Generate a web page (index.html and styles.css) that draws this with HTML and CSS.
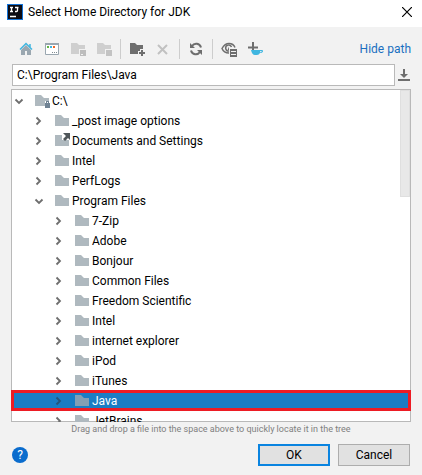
FILE: index.html
```html
<!DOCTYPE html>
<html lang="en">

<head>
  <meta charset="UTF-8">
  <meta name="viewport" content="width=device-width, initial-scale=1.0">
  <title>Select Home Directory for JDK</title>
  <link rel="stylesheet" href="styles.css">
</head>

<body>
  <svg class="symbols" width="0" height="0" aria-hidden="true">
    <symbol id="folder" viewBox="0 0 16 16">
      <path d="M0 2h6l3 3h5v8H0z" />
    </symbol>
    <symbol id="right" viewBox="0 0 10 10">
      <path d="M2.500 1.500L6 5 2.500 8.500" fill="none" stroke="currentColor" stroke-width="1.800" />
    </symbol>
    <symbol id="down" viewBox="0 0 10 10">
      <path d="M1.500 3.500L5 7l3.500-3.500" fill="none" stroke="currentColor" stroke-width="1.800" />
    </symbol>
  </svg>

  <header class="titlebar">
    <svg class="app-logo" width="16" height="16" viewBox="0 0 16 16">
      <path d="M0 0h16v16H0z" fill="#1473d8" />
      <path d="M1 1h14v14H1z" fill="#0c0c14" />
      <path d="M3 3.5h3M4.500 3v5M3 7.500h3M8 3.500h3.500M10.500 3v3.500q0 1-1 1H8M3 12.500h6" fill="none" stroke="#fff" stroke-width="1.300" />
    </svg>
    <h1>Select Home Directory for JDK</h1>
    <button class="close" aria-label="Close">
      <svg width="10" height="10" viewBox="0 0 10 10"><path d="M0 0l10 10M10 0L0 10" stroke="#000" stroke-width="1.200" /></svg>
    </button>
  </header>

  <main class="dialog">
    <div class="toolbar">
      <button class="tool" aria-label="Home">
        <svg width="16" height="16" viewBox="0 0 16 16">
          <path d="M3 9l5-5 5 5v5h-4v-4H7v4H3z" fill="#9aa7b0" />
          <path d="M2 8.500l6-6 6 6M12 3v3" fill="none" stroke="#40b6e0" stroke-width="1.500" />
        </svg>
      </button>
      <button class="tool" aria-label="Desktop">
        <svg width="16" height="16" viewBox="0 0 16 16">
          <path d="M1.500 2.500h13v11h-13z" fill="#fff" stroke="#9aa7b0" />
          <path d="M1 2h14v2H1z" fill="#9aa7b0" />
          <path d="M3 5h2v2H3z" fill="#62b543" />
          <path d="M6 5h2v2H6z" fill="#40b6e0" />
          <path d="M9 5h2v2H9z" fill="#f26522" />
          <path d="M8 11h1v1H8zM10 11h1v1h-1zM12 11h1v1h-1z" fill="#7f8b91" />
        </svg>
      </button>
      <button class="tool" aria-label="Project directory" disabled>
        <svg width="16" height="16" viewBox="0 0 16 16">
          <path d="M1 2h6l2 2h6v4H9v5H1z" fill="#cfcfcf" />
          <path d="M10 9h6v6h-6z" fill="#bdbdbd" />
          <path d="M11 13h2v1h-2z" fill="#f2f2f2" />
        </svg>
      </button>
      <button class="tool" aria-label="Module directory" disabled>
        <svg width="16" height="16" viewBox="0 0 16 16">
          <path d="M1 2h6l2 2h6v4H9v5H1z" fill="#cfcfcf" />
          <path d="M10 9h6v6h-6z" fill="#c3c3c3" />
        </svg>
      </button>
      <span class="separator"></span>
      <button class="tool" aria-label="New folder">
        <svg width="16" height="16" viewBox="0 0 16 16">
          <path d="M1 2h5l2 2h6v4h-3v2H9v3H1z" fill="#6e6e6e" />
          <path d="M13 9v6M10 12h6" stroke="#6e6e6e" stroke-width="2" />
        </svg>
      </button>
      <button class="tool" aria-label="Delete" disabled>
        <svg width="16" height="16" viewBox="0 0 16 16">
          <path d="M3 4l9 9M12 4l-9 9" stroke="#c1c1c1" stroke-width="2" />
        </svg>
      </button>
      <span class="separator"></span>
      <button class="tool" aria-label="Refresh">
        <svg width="16" height="16" viewBox="0 0 16 16">
          <path d="M13 6.500A5 5 0 0 0 4 5M3 9.500A5 5 0 0 0 12 11" fill="none" stroke="#6e6e6e" stroke-width="2" />
          <path d="M2 2v5h5zM14 14V9H9z" fill="#6e6e6e" />
        </svg>
      </button>
      <span class="separator"></span>
      <button class="tool" aria-label="Show hidden files">
        <svg width="16" height="16" viewBox="0 0 16 16">
          <path d="M8 12C5 12 2 10 1 7.500 3 4 5 2.500 8 2.500s5 1.500 6 4" fill="none" stroke="#6e6e6e" stroke-width="1.500" />
          <path d="M10.500 6A3 3 0 1 0 8 10" fill="none" stroke="#6e6e6e" stroke-width="1.500" />
          <path d="M8 5.500V9H6.500z" fill="#6e6e6e" />
          <path d="M9 8h7v8H9z" fill="#6e6e6e" />
          <path d="M10 10.500h5M10 13.500h5" stroke="#f2f2f2" />
        </svg>
      </button>
      <button class="tool" aria-label="Add JDK">
        <svg width="16" height="16" viewBox="0 0 16 16">
          <path d="M6 1v9M1 6.500h10" stroke="#6e6e6e" stroke-width="2" />
          <path d="M4 9h11q1.500 0 1 1.500T13 12q-1 2-3 2H8q-3 0-4-5z" fill="#40b6e0" />
          <path d="M13 10h2l-1.500 1.500z" fill="#f2f2f2" />
        </svg>
      </button>
      <a href="#" class="hide-path">Hide path</a>
    </div>

    <div class="path-row">
      <input class="path" type="text" aria-label="Path" value="C:\Program Files\Java">
      <button class="history" aria-label="Path history">
        <svg width="12" height="14" viewBox="0 0 12 14">
          <path d="M5 1h2v5h3l-4 4-4-4h3zM0 11h12v2H0z" fill="#6e6e6e" />
        </svg>
      </button>
    </div>

    <div class="tree-panel">
      <ul class="tree" role="tree">
        <li class="row" role="treeitem">
          <svg class="arrow"><use href="#down" /></svg>
          <svg class="folder" viewBox="0 0 16 16">
            <path d="M0 2h6l3 3h5v3h-4v5H0z" />
            <path class="lock" d="M10 10h1V8h3v2h1v5h-5zM12 9v1h1V9z" />
          </svg>
          C:\
        </li>
        <li class="row level-1" role="treeitem"><svg class="arrow"><use href="#right" /></svg><svg class="folder"><use href="#folder" /></svg>_post image options</li>
        <li class="row level-1" role="treeitem">
          <svg class="arrow"><use href="#right" /></svg>
          <svg class="folder" viewBox="0 0 16 16">
            <path d="M0 2h7v5h7v6H0z" />
            <path class="link" d="M8 0h7v7l-2-2-3 3-2-2 3-3z" />
          </svg>
          Documents and Settings
        </li>
        <li class="row level-1" role="treeitem"><svg class="arrow"><use href="#right" /></svg><svg class="folder"><use href="#folder" /></svg>Intel</li>
        <li class="row level-1" role="treeitem"><svg class="arrow"><use href="#right" /></svg><svg class="folder"><use href="#folder" /></svg>PerfLogs</li>
        <li class="row level-1" role="treeitem"><svg class="arrow"><use href="#down" /></svg><svg class="folder"><use href="#folder" /></svg>Program Files</li>
        <li class="row level-2" role="treeitem"><svg class="arrow"><use href="#right" /></svg><svg class="folder"><use href="#folder" /></svg>7-Zip</li>
        <li class="row level-2" role="treeitem"><svg class="arrow"><use href="#right" /></svg><svg class="folder"><use href="#folder" /></svg>Adobe</li>
        <li class="row level-2" role="treeitem"><svg class="arrow"><use href="#right" /></svg><svg class="folder"><use href="#folder" /></svg>Bonjour</li>
        <li class="row level-2" role="treeitem"><svg class="arrow"><use href="#right" /></svg><svg class="folder"><use href="#folder" /></svg>Common Files</li>
        <li class="row level-2" role="treeitem"><svg class="arrow"><use href="#right" /></svg><svg class="folder"><use href="#folder" /></svg>Freedom Scientific</li>
        <li class="row level-2" role="treeitem"><svg class="arrow"><use href="#right" /></svg><svg class="folder"><use href="#folder" /></svg>Intel</li>
        <li class="row level-2" role="treeitem"><svg class="arrow"><use href="#right" /></svg><svg class="folder"><use href="#folder" /></svg>internet explorer</li>
        <li class="row level-2" role="treeitem"><svg class="arrow"><use href="#right" /></svg><svg class="folder"><use href="#folder" /></svg>iPod</li>
        <li class="row level-2" role="treeitem"><svg class="arrow"><use href="#right" /></svg><svg class="folder"><use href="#folder" /></svg>iTunes</li>
        <li class="row level-2 selected" role="treeitem" aria-selected="true"><svg class="arrow"><use href="#right" /></svg><svg class="folder"><use href="#folder" /></svg>Java</li>
        <li class="row level-2" role="treeitem"><svg class="arrow"><use href="#right" /></svg><svg class="folder"><use href="#folder" /></svg>JetBrains</li>
      </ul>
      <div class="scroll-thumb"></div>
    </div>
    <p class="hint">Drag and drop a file into the space above to quickly locate it in the tree</p>

    <footer class="actions">
      <button class="help" aria-label="Help">?</button>
      <button class="btn primary">OK</button>
      <button class="btn">Cancel</button>
    </footer>
  </main>
</body>

</html>
```
FILE: styles.css
```css
* {
  margin: 0;
  padding: 0;
  box-sizing: border-box;
}

body {
  font-family: Roboto, "Open Sans", sans-serif;
  font-size: 12px;
  color: #000;
  background: #f2f2f2;
  height: 100vh;
  display: flex;
  flex-direction: column;
}

button {
  font: inherit;
  color: inherit;
  background: none;
  border: none;
}

svg {
  display: block;
  flex: none;
}

.symbols {
  position: absolute;
}

.titlebar {
  display: flex;
  align-items: center;
  height: 27px;
  padding: 0 10px 4px 7px;
  background: #fff;
}

.titlebar h1 {
  flex: 1;
  margin-left: 5px;
  font-size: 12px;
  font-weight: normal;
}

.dialog {
  flex: 1;
  min-height: 0;
  display: flex;
  flex-direction: column;
  padding: 0 11px 9px;
}

.toolbar {
  display: flex;
  align-items: center;
  height: 37px;
  padding: 7px 0 0 2px;
}

.tool {
  width: 26px;
  padding: 0 5px;
}

.separator {
  width: 1px;
  height: 20px;
  margin: 0 3px;
  background: #cdcdcd;
}

.hide-path {
  margin-left: auto;
  color: #1a6fc0;
  text-decoration: none;
}

.path-row {
  display: flex;
  align-items: center;
  gap: 3px;
  margin: 0 1px 3px;
}

.path {
  flex: 1;
  min-width: 0;
  height: 22px;
  padding: 0 4px;
  font: inherit;
  border: 1px solid #b9b9b9;
  background: #fff;
  outline: none;
}

.tree-panel {
  position: relative;
  flex: 1;
  min-height: 0;
  overflow: clip;
  overflow-clip-margin: 1px;
  padding-top: 1px;
  background: #fff;
  border: 1px solid #b9b9b9;
}

.tree {
  list-style: none;
}

.row {
  display: flex;
  align-items: center;
  height: 20px;
  padding-left: 2px;
  white-space: nowrap;
}

.level-1 {
  padding-left: 22px;
}

.level-2 {
  padding-left: 42px;
}

.arrow {
  width: 10px;
  height: 10px;
  margin-right: 11px;
  color: #6e6e6e;
}

.folder {
  width: 16px;
  height: 16px;
  margin-right: 1px;
  fill: #afb9bf;
}

.lock {
  fill: #6f8293;
  fill-rule: evenodd;
}

.link {
  fill: #4f565a;
}

.selected {
  position: relative;
  color: #fff;
  background: #1a7dc4;
}

.selected::after {
  content: '';
  position: absolute;
  inset: -1px -1px 0;
  border: 3px solid #ed1c24;
}

.selected .arrow {
  color: #275379;
}

.selected .folder {
  fill: #839fb4;
}

.scroll-thumb {
  position: absolute;
  top: 0;
  right: 0;
  width: 10px;
  height: 107px;
  background: #e8e8e8;
  border: 1px solid #dfdfdf;
}

.hint {
  font-size: 9px;
  line-height: 14px;
  color: #808080;
  text-align: center;
}

.actions {
  display: flex;
  align-items: center;
  gap: 8px;
  padding: 8px 1px 0;
}

.help {
  width: 16px;
  height: 16px;
  margin-right: auto;
  border-radius: 50%;
  line-height: 16px;
  color: #fff;
  background: #0a6ccd;
}

.btn {
  width: 72px;
  height: 22px;
  background: #e1e1e1;
  border: 1px solid #adadad;
}

.primary {
  border: 2px solid #0a84e0;
}
```
